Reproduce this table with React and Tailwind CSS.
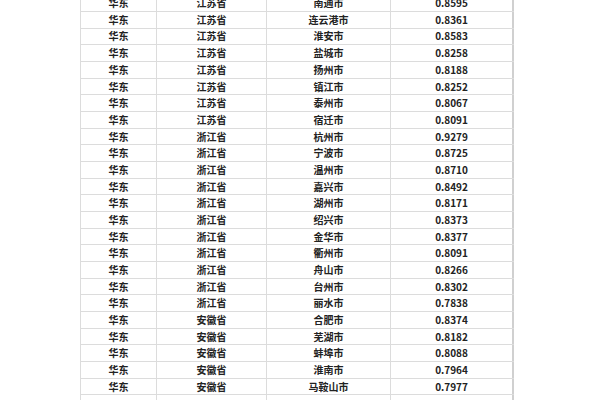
import React from "react";

const rows = [
  ["江苏省", "南通市", "0.8595"],
  ["江苏省", "连云港市", "0.8361"],
  ["江苏省", "淮安市", "0.8583"],
  ["江苏省", "盐城市", "0.8258"],
  ["江苏省", "扬州市", "0.8188"],
  ["江苏省", "镇江市", "0.8252"],
  ["江苏省", "泰州市", "0.8067"],
  ["江苏省", "宿迁市", "0.8091"],
  ["浙江省", "杭州市", "0.9279"],
  ["浙江省", "宁波市", "0.8725"],
  ["浙江省", "温州市", "0.8710"],
  ["浙江省", "嘉兴市", "0.8492"],
  ["浙江省", "湖州市", "0.8171"],
  ["浙江省", "绍兴市", "0.8373"],
  ["浙江省", "金华市", "0.8377"],
  ["浙江省", "衢州市", "0.8091"],
  ["浙江省", "舟山市", "0.8266"],
  ["浙江省", "台州市", "0.8302"],
  ["浙江省", "丽水市", "0.7838"],
  ["安徽省", "合肥市", "0.8374"],
  ["安徽省", "芜湖市", "0.8182"],
  ["安徽省", "蚌埠市", "0.8088"],
  ["安徽省", "淮南市", "0.7964"],
  ["安徽省", "马鞍山市", "0.7977"],
  ["", "", ""],
];

export default function App() {
  return (
    <div
      className="w-[600px] h-[400px] overflow-hidden bg-white text-[#222] text-[10px] font-semibold"
      style={{ fontFamily: '"Noto Sans CJK SC", "Noto Sans", sans-serif' }}
    >
      <div className="ml-[80px] w-[434px] -mt-[4.7px] flex flex-col">
        {rows.map((r, i) => (
          <div
            key={i}
            className="flex h-[16.68px] border-b border-[#dcdcdc] leading-none"
          >
            <div className="w-[77px] border-l border-r border-[#dcdcdc] flex items-center justify-center">
              {r[0] ? "华东" : ""}
            </div>
            <div className="w-[110px] border-r border-[#dcdcdc] flex items-center justify-center">
              {r[0]}
            </div>
            <div className="w-[124px] border-r border-[#dcdcdc] flex items-center justify-center">
              {r[1]}
            </div>
            <div className="w-[123px] border-r-2 border-[#d0d0d0] flex items-center justify-center">
              {r[2]}
            </div>
          </div>
        ))}
      </div>
    </div>
  );
}
